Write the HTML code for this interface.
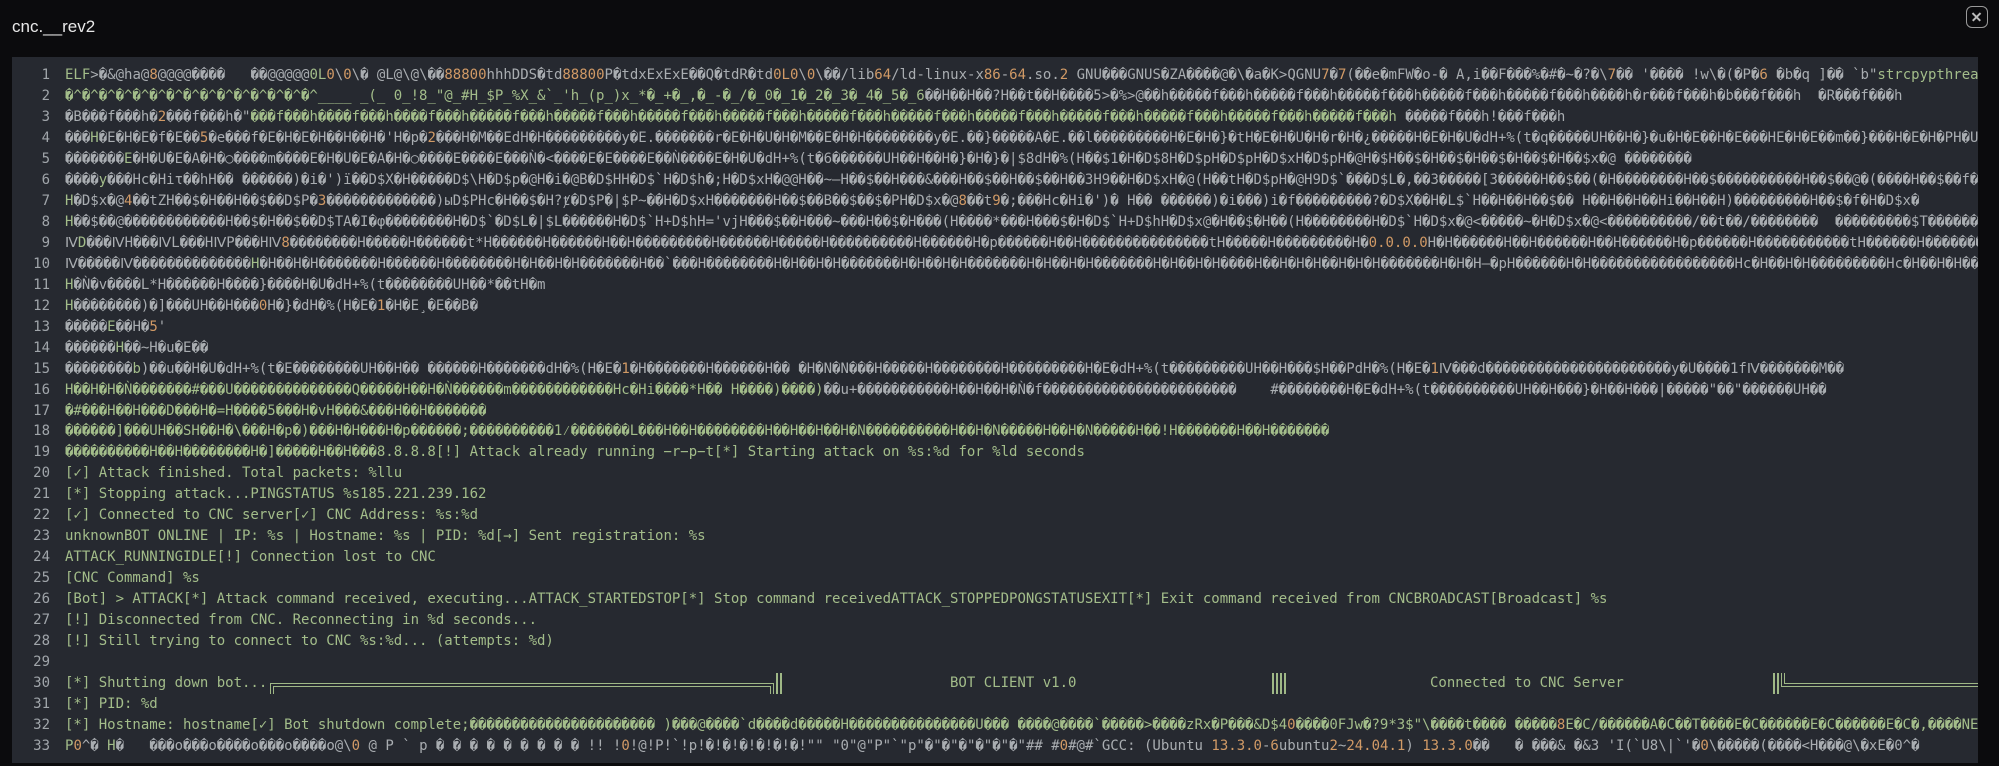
<!DOCTYPE html>
<html><head><meta charset="utf-8"><style>
html,body{margin:0;padding:0;background:#0b0b0d;width:1999px;height:766px;overflow:hidden}
.title{position:absolute;left:12px;top:17px;color:#e8e8e8;font:17px "Liberation Sans",sans-serif}
.close{position:absolute;left:1966px;top:6px;width:22px;height:22px;border:1.5px solid #9a9a9a;border-radius:6px;box-sizing:border-box}
.close:before,.close:after{content:"";position:absolute;left:4px;top:9px;width:11px;height:1.6px;background:#bbb;transform:rotate(45deg)}
.close:after{transform:rotate(-45deg)}
.panel{position:absolute;left:12px;top:57px;width:1966px;height:706px;background:#262930;overflow:hidden}
.code{position:absolute;left:0;top:8px;width:1966px;font:14px "DejaVu Sans Mono","Liberation Mono",monospace;color:#a9adb1}
.code>div{height:20.97px;line-height:20.97px;overflow:hidden;white-space:pre;position:relative}
.ln{display:inline-block;width:38px;text-align:right;color:#a0a5aa;margin-right:15px}
.g{color:#a3bd8a}.o{color:#d19a66}
.L{color:#a3bd8a}
.a{position:absolute;top:0}
.bx{position:absolute;box-sizing:border-box;border-color:#9fb886}
.vv{position:absolute;top:0;height:21px;width:6px;border-left:2px solid #9fb886;border-right:2px solid #9fb886;box-sizing:border-box}
</style></head><body>
<div class="title">cnc.__rev2</div>
<div class="close"></div>
<div class="panel"><div class="code"><div><span class="ln">1</span><span class="g">ELF</span>&gt;�&amp;@ha@<span class="o">8</span>@@@@����   ��@@@@@<span class="g">0L</span><span class="o">0</span>\<span class="o">0</span>\� @L@\@\��<span class="o">88800</span>hhhDDS�td<span class="o">88800</span>P�tdxExExE��Q�tdR�td<span class="o">0L0</span>\<span class="o">0</span>\��/lib<span class="o">64</span>/ld-linux-x<span class="o">86</span>-<span class="o">64</span>.so.<span class="o">2</span> GNU���GNUS�ZA����@�\�a�K&gt;QGNU<span class="o">7</span>�<span class="o">7</span>(��e�mFW�o-� A,i��F���%�#�~�?�\<span class="o">7</span>�� '���� !w\�(�P�<span class="o">6</span> �b�q ]�� `b"<span class="g">strcpypthread_create</span></div>
<div><span class="ln">2</span><span class="g">�^�^�^�^�^�^�^�^�^�^�^�^�^�^�^____ _(_ 0_!8_"@_#H_$P_%X_&amp;`_'h_(p_)x_*�_+�_,�_-�_/�_0�_1�_2�_3�_4�_5�_6</span>��H��H��?H��t��H����5&gt;�%&gt;@��h�����f���h�����f���h�����f���h�����f���h�����f���h����h�r���f���h�b���f���h  �R���f���h</div>
<div><span class="ln">3</span>�B���f���h�<span class="o">2</span>���f���h�"<span class="g">���f���h����f���h����f���h�����f���h�����f���h�����f���h�����f���h�����f���h�����f���h�����f���h�����f���h�����f���h�����f���h�����f���h</span> �����f���h!���f���h</div>
<div><span class="ln">4</span>���<span class="g">H</span>�E�H�E�f�E��<span class="o">5</span>�e���f�E�H�E�H��H��H�'H�p�<span class="o">2</span>���H�M��EdH�H���������y�E.�������r�E�H�U�H�M��E�H�H��������y�E.��}�����A�E.��l���������H�E�H�}�tH�E�H�U�H�r�H�¿�����H�E�H�U�dH+%(t�q�����UH��H�}�u�H�E��H�E���HE�H�E��m��}���H�E�H�PH�U��</div>
<div><span class="ln">5</span>�������<span class="g">E</span>�H�U�E�A�H�○����m����E�H�U�E�A�H�○����E����E���Ǹ�&lt;����E�E����E��Ǹ����E�H�U�dH+%(t�6������UH��H��H�}�H�}�|$8dH�%(H��$1�H�D$8H�D$pH�D$pH�D$xH�D$pH�@H�$H��$�H��$�H��$�H��$�H��$x�@ ��������</div>
<div><span class="ln">6</span>����<span class="g">y</span>���Hc�Hiτ��hH�� ������)�i�')ї��D$X�H�����D$\H�D$p�@H�i�@B�D$HH�D$`H�D$h�;H�D$xH�@@H��~—H��$��H���&amp;���H��$��H��$��H��3H9��H�D$xH�@(H��tH�D$pH�@H9D$`���D$L�,��3�����[3�����H��$��(�H��������H��$����������H��$��@�(����H��$��f�B�</div>
<div><span class="ln">7</span><span class="g">H</span>�D$x�@<span class="o">4</span>��tZH��$�H��H��$��D$P�<span class="o">3</span>�������������)ыD$PHc�H��$�H?ⱦ�D$P�|$P~��H�D$xH�������H��$��B��$��$�PH�D$x�@<span class="o">8</span>��t<span class="o">9</span>�;���Hc�Hi�')� H�� ������)�i���)i�f���������?�D$X��H�L$`H��H��H��$�� H��H��H��Hi��H��H)���������H��$�f�H�D$x�</div>
<div><span class="ln">8</span><span class="g">H</span>��$��@������������H��$�H��$��D$TA�I�φ��������H�D$`�D$L�|$L������H�D$`H+D$hH='vjH���$��H���~���H��$�H���(H����*���H���$�H�D$`H+D$hH�D$x@�H��$�H��(H��������H�D$`H�D$x�@&lt;�����~�H�D$x�@&lt;����������/��t��/��������  ���������$T������H</div>
<div><span class="ln">9</span>Ⅳ<span class="g">D</span>���ⅣH���ⅣL���HⅣP���HⅣ<span class="o">8</span>��������H�����H������t*H������H������H��H���������H������H�����H����������H������H�p������H��H���������������tH�����H���������H�<span class="o">0.0.0.0</span>H�H������H��H������H��H������H�p������H�����������tH������H���������H��������tH������H���=������H�����H�p�</div>
<div><span class="ln">10</span>Ⅳ�����Ⅳ��������������<span class="g">H</span>�H��H�H�������H������H��������H�H��H�H�������H��`���H��������H�H��H�H�������H�H��H�H�������H�H��H�H�������H�H��H�H����H��H�H�H��H�H�H�������H�H�H—�pH������H�H�����������������Hc�H��H�H���������Hc�H��H�H������H���&gt;����������������;������(���-�����������H��Ǖ�����</div>
<div><span class="ln">11</span><span class="g">H</span>�Ǹ�v����L*H������H����}����H�U�dH+%(t��������UH��*��tH�m</div>
<div><span class="ln">12</span><span class="g">H</span>��������)�]���UH��H���<span class="o">0</span>H�}�dH�%(H�E�<span class="o">1</span>�H�E¸�E��B�</div>
<div><span class="ln">13</span>�����<span class="g">E</span>��H�<span class="o">5</span>'</div>
<div><span class="ln">14</span>������<span class="g">H</span>��~H�u�E��</div>
<div><span class="ln">15</span>��������<span class="g">b</span>)��u��H�U�dH+%(t�E��������UH��H�� ������H�������dH�%(H�E�<span class="o">1</span>�H�������H������H�� �H�N�N���H�����H��������H���������H�E�dH+%(t���������UH��H���$H��PdH�%(H�E�<span class="o">1</span>Ⅳ���d����������������������y�U����1fⅣ�������M��</div>
<div><span class="ln">16</span><span class="g">H��H�H�Ǹ�������#���U��������������Q�����H��H�Ǹ������m������������Hc�Hi����*H�� H����)����)</span>��u+�����������H��H��H�Ǹ�f�����������������������    #��������H�E�dH+%(t����������UH��H���}�H��H���|�����"��"������UH��</div>
<div><span class="ln">17</span><span class="g">�#���H��H���D���H�=H����5���H�vH���&amp;���H��H�������</span></div>
<div><span class="ln">18</span><span class="g">������]���UH��SH��H�\���H�p�)���H�H���H�p������;����������1⁄�������L���H��H��������H��H��H��H�N����������H��H�N�����H��H�N�����H��!H�������H��H�������</span></div>
<div><span class="ln">19</span><span class="g">����������H��H��������H�]�����H��H���8.8.8.8[!] Attack already running −r−p−t[*] Starting attack on %s:%d for %ld seconds</span></div>
<div class="L"><span class="ln">20</span>[✓] Attack finished. Total packets: %llu</div>
<div class="L"><span class="ln">21</span>[*] Stopping attack...PINGSTATUS %s185.221.239.162</div>
<div class="L"><span class="ln">22</span>[✓] Connected to CNC server[✓] CNC Address: %s:%d</div>
<div class="L"><span class="ln">23</span>unknownBOT ONLINE | IP: %s | Hostname: %s | PID: %d[→] Sent registration: %s</div>
<div class="L"><span class="ln">24</span>ATTACK_RUNNINGIDLE[!] Connection lost to CNC</div>
<div class="L"><span class="ln">25</span>[CNC Command] %s</div>
<div class="L"><span class="ln">26</span>[Bot] &gt; ATTACK[*] Attack command received, executing...ATTACK_STARTEDSTOP[*] Stop command receivedATTACK_STOPPEDPONGSTATUSEXIT[*] Exit command received from CNCBROADCAST[Broadcast] %s</div>
<div class="L"><span class="ln">27</span>[!] Disconnected from CNC. Reconnecting in %d seconds...</div>
<div class="L"><span class="ln">28</span>[!] Still trying to connect to CNC %s:%d... (attempts: %d)</div>
<div class="L"><span class="ln">29</span></div>
<div class="L"><span class="ln">30</span>[*] Shutting down bot...<span class="bx" style="left:258px;top:10px;width:504px;height:11px;border-style:double;border-width:4px 4px 0 4px"></span><span class="vv" style="left:764px"></span><span class="a" style="left:938px">BOT CLIENT v1.0</span><span class="vv" style="left:1260px"></span><span class="vv" style="left:1268px"></span><span class="a" style="left:1418px">Connected to CNC Server</span><span class="vv" style="left:1761px"></span><span class="bx" style="left:1769px;top:0;width:300px;height:14px;border-style:double;border-width:0 0 4px 4px"></span></div>
<div class="L"><span class="ln">31</span>[*] PID: %d</div>
<div class="L"><span class="ln">32</span>[*] Hostname: hostname[✓] Bot shutdown complete;<span class="g">���������������������� )���@����`d����d�����H���������������U���</span> ����@����`�����&gt;����zRx�P���&amp;D$4<span class="o">0</span>����0FJw�?9*3$"\����t���� �����<span class="o">8</span>E�C/������<span class="g">A</span>�C��<span class="g">T</span>����E�C������<span class="g">E</span>�C������<span class="g">E</span>�C�,����<span class="g">N</span>E�CE</div>
<div style="color:#a9adb1"><span class="ln">33</span><span class="g">P</span><span class="o">0</span>^� <span class="g">H</span>�   ���o���o����o���o����o@\<span class="o">0</span> @ P ` p � � � � � � � � � !! !<span class="o">0</span>!@!P!`!p!�!�!�!�!�!�!"" "0"@"P"`"p"�"�"�"�"�"�"## #<span class="o">0</span>#@#`GCC: (Ubuntu <span class="o">13.3.0</span>-<span class="o">6</span>ubuntu<span class="o">2</span>~<span class="o">24.04.1</span>) <span class="o">13.3.0</span>��   � ���&amp; �&amp;3 'I(`U8\|`'�<span class="o">0</span>\�����(����&lt;H���@\�xE�0^�</div>
</div></div>
</body></html>
